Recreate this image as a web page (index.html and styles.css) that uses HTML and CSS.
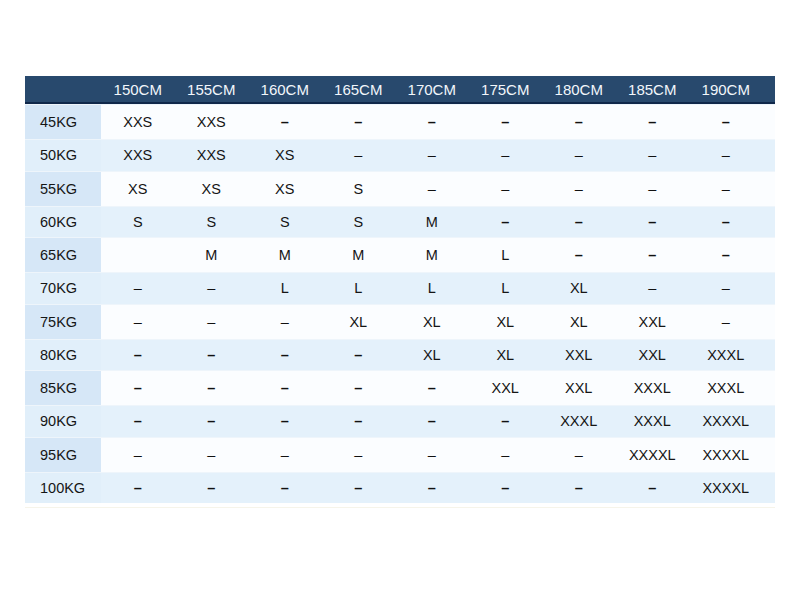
FILE: index.html
```html
<!DOCTYPE html>
<html>
<head>
<meta charset="utf-8">
<link rel="stylesheet" href="styles.css">
</head>
<body>
<div class="chart">
  <div class="row head">
    <div class="c lab"></div>
    <div class="c">150CM</div><div class="c">155CM</div><div class="c">160CM</div><div class="c">165CM</div><div class="c">170CM</div><div class="c">175CM</div><div class="c">180CM</div><div class="c">185CM</div><div class="c">190CM</div>
  </div>
  <div class="row odd">
    <div class="c lab">45KG</div>
    <div class="c">XXS</div><div class="c">XXS</div><div class="c d">–</div><div class="c d">–</div><div class="c d">–</div><div class="c d">–</div><div class="c d">–</div><div class="c d">–</div><div class="c d">–</div>
  </div>
  <div class="row even">
    <div class="c lab">50KG</div>
    <div class="c">XXS</div><div class="c">XXS</div><div class="c">XS</div><div class="c d t">–</div><div class="c d t">–</div><div class="c d t">–</div><div class="c d t">–</div><div class="c d t">–</div><div class="c d t">–</div>
  </div>
  <div class="row odd">
    <div class="c lab">55KG</div>
    <div class="c">XS</div><div class="c">XS</div><div class="c">XS</div><div class="c">S</div><div class="c d t">–</div><div class="c d t">–</div><div class="c d t">–</div><div class="c d t">–</div><div class="c d t">–</div>
  </div>
  <div class="row even">
    <div class="c lab">60KG</div>
    <div class="c">S</div><div class="c">S</div><div class="c">S</div><div class="c">S</div><div class="c">M</div><div class="c d">–</div><div class="c d">–</div><div class="c d">–</div><div class="c d">–</div>
  </div>
  <div class="row odd">
    <div class="c lab">65KG</div>
    <div class="c"></div><div class="c">M</div><div class="c">M</div><div class="c">M</div><div class="c">M</div><div class="c">L</div><div class="c d">–</div><div class="c d">–</div><div class="c d">–</div>
  </div>
  <div class="row even">
    <div class="c lab">70KG</div>
    <div class="c d t">–</div><div class="c d t">–</div><div class="c">L</div><div class="c">L</div><div class="c">L</div><div class="c">L</div><div class="c">XL</div><div class="c d t">–</div><div class="c d t">–</div>
  </div>
  <div class="row odd">
    <div class="c lab">75KG</div>
    <div class="c d t">–</div><div class="c d t">–</div><div class="c d t">–</div><div class="c">XL</div><div class="c">XL</div><div class="c">XL</div><div class="c">XL</div><div class="c">XXL</div><div class="c d t">–</div>
  </div>
  <div class="row even">
    <div class="c lab">80KG</div>
    <div class="c d">–</div><div class="c d">–</div><div class="c d">–</div><div class="c d">–</div><div class="c">XL</div><div class="c">XL</div><div class="c">XXL</div><div class="c">XXL</div><div class="c">XXXL</div>
  </div>
  <div class="row odd">
    <div class="c lab">85KG</div>
    <div class="c d">–</div><div class="c d">–</div><div class="c d">–</div><div class="c d">–</div><div class="c d">–</div><div class="c">XXL</div><div class="c">XXL</div><div class="c">XXXL</div><div class="c">XXXL</div>
  </div>
  <div class="row even">
    <div class="c lab">90KG</div>
    <div class="c d">–</div><div class="c d">–</div><div class="c d">–</div><div class="c d">–</div><div class="c d">–</div><div class="c d">–</div><div class="c">XXXL</div><div class="c">XXXL</div><div class="c">XXXXL</div>
  </div>
  <div class="row odd">
    <div class="c lab">95KG</div>
    <div class="c d t">–</div><div class="c d t">–</div><div class="c d t">–</div><div class="c d t">–</div><div class="c d t">–</div><div class="c d t">–</div><div class="c d t">–</div><div class="c">XXXXL</div><div class="c">XXXXL</div>
  </div>
  <div class="row even">
    <div class="c lab">100KG</div>
    <div class="c d">–</div><div class="c d">–</div><div class="c d">–</div><div class="c d">–</div><div class="c d">–</div><div class="c d">–</div><div class="c d">–</div><div class="c d">–</div><div class="c">XXXXL</div>
  </div>
  <div class="foot"></div>
</div>
</body>
</html>
```

FILE: styles.css
```css
html, body {
  margin: 0;
  padding: 0;
  background: #ffffff;
}
body {
  padding: 76px 25px 0 25px;
  font-family: "Liberation Sans", Arial, sans-serif;
  font-size: 14.5px;
  color: #151515;
}
.chart {
  width: 750px;
}
.row {
  display: grid;
  grid-template-columns: 76px repeat(9, 73.5px) 1fr;
  align-items: stretch;
}
.c {
  display: flex;
  align-items: center;
  justify-content: center;
  white-space: nowrap;
}
.lab {
  justify-content: flex-start;
  padding-left: 15px;
}
.head {
  height: 26px;
  background: #28496d;
  border-bottom: 2px solid #10284a;
  color: #f2f6fb;
  font-size: 15px;
}
.head .c {
  padding-top: 0;
}
.odd {
  height: 34.25px;
  background: #fbfdff;
  border-top: 1px solid #eef5fb;
}
.odd .lab {
  background: #d6e7f7;
}
.even {
  height: 30.25px;
  background: #e4f1fb;
  border-top: 1px solid #eef5fb;
}
.even .lab {
  background: #e1effa;
}
.d {
  font-weight: 700;
  color: #111;
}
.t {
  font-weight: 400;
}
.foot {
  height: 4px;
  border-bottom: 1px solid #f6f4ea;
}
```
